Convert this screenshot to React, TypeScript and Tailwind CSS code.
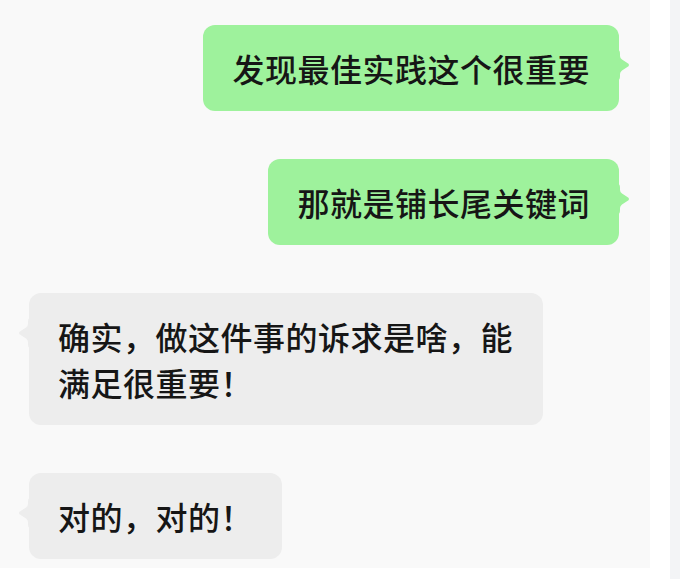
import React from "react";

type Msg = { side: "left" | "right"; text: string };

const messages: Msg[] = [
  { side: "right", text: "发现最佳实践这个很重要" },
  { side: "right", text: "那就是铺长尾关键词" },
  { side: "left", text: "确实，做这件事的诉求是啥，能满足很重要！" },
  { side: "left", text: "对的，对的！" },
];

function Tail({ side, color }: { side: "left" | "right"; color: string }) {
  return (
    <svg
      width="12"
      height="30"
      viewBox="0 0 12 30"
      className={`absolute top-[25px] ${side === "right" ? "right-[-11px]" : "left-[-11px] -scale-x-100"}`}
    >
      <path
        d="M0 0 Q2 0 2 4 L2 6 Q2 8 4 9.5 L10.5 13.8 Q11.5 15 10.5 16.2 L4 20.5 Q2 22 2 24 L2 26 Q2 30 0 30 Z"
        fill={color}
      />
    </svg>
  );
}

function Bubble({ msg }: { msg: Msg }) {
  const isRight = msg.side === "right";
  const color = isRight ? "#9ef29c" : "#ededed";
  return (
    <div className={`flex ${isRight ? "justify-end" : "justify-start"}`}>
      <div
        className={`relative rounded-[12px] px-[29px] py-5 text-[32px] leading-[46px] tracking-[0.5px] font-medium text-[#161616] max-w-[514px] ${
          isRight ? "bg-[#9ef29c]" : "bg-[#ededed]"
        }`}
      >
        <Tail side={msg.side} color={color} />
        {msg.text}
      </div>
    </div>
  );
}

export default function App() {
  return (
    <div className="flex w-[680px] h-[579px] bg-white" style={{ fontFamily: '"Noto Sans CJK SC", "Noto Sans", sans-serif' }}>
      <div className="w-[650px] h-[568px] bg-[#f9f9f9] pt-[25px] pl-[29px] pr-[31px] flex flex-col gap-[48px]">
        {messages.map((m, i) => (
          <Bubble key={i} msg={m} />
        ))}
      </div>
      <div className="w-[20px] h-full bg-white" />
      <div className="w-[10px] h-full bg-[#f3f4f6]" />
    </div>
  );
}
